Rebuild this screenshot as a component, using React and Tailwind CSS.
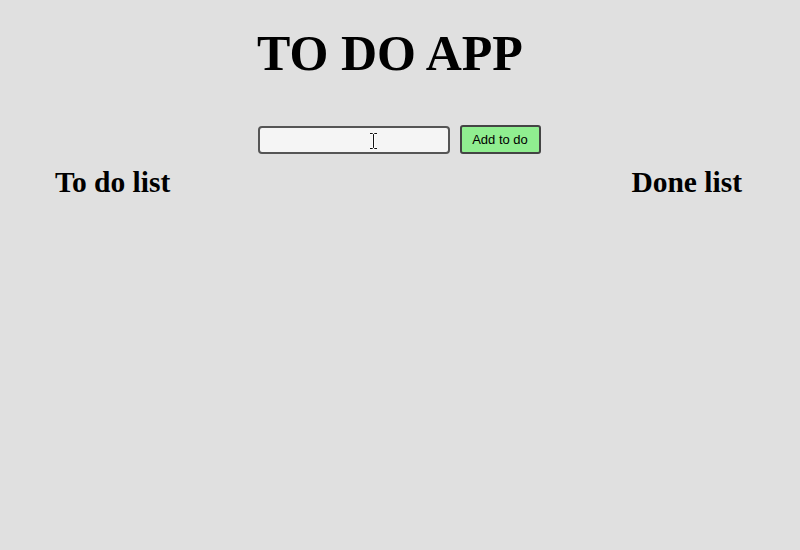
import React from "react";

const App = () => {
  return (
    <div className="min-h-screen bg-[#e0e0e0] font-['Liberation_Serif',serif] text-black">
      {/* Title */}
      <h1 className="pt-[26px] pr-[20px] text-center text-[50px] font-bold leading-[55px]">
        TO DO APP
      </h1>

      {/* Input row */}
      <div className="mt-[44px] flex items-center justify-center gap-[10px] pr-[2px]">
        <div className="relative">
          <input
            type="text"
            className="h-[28px] w-[192px] rounded-[4px] border-2 border-[#555] bg-[#f5f5f5] px-1 outline-none"
          />
          {/* mouse cursor */}
          <svg
            className="pointer-events-none absolute left-[111px] top-[7px]"
            width="9"
            height="16"
            viewBox="0 0 9 16"
          >
            <path d="M1 0.5h2.5l1 1 1-1H8M4.5 1.5v13M1 15.5h2.5l1-1 1 1H8" fill="none" stroke="#fff" strokeWidth="2.5" />
            <path d="M1 0.5h2.5l1 1 1-1H8M4.5 1.5v13M1 15.5h2.5l1-1 1 1H8" fill="none" stroke="#111" strokeWidth="1" />
          </svg>
        </div>
        <button className="h-[29px] w-[81px] rounded-[3px] border-2 border-[#444] bg-[#90ee90] font-['Liberation_Sans',sans-serif] text-[13px] leading-none">
          Add to do
        </button>
      </div>

      {/* Lists */}
      <div className="mt-[11px] flex justify-between pl-[55px] pr-[58px]">
        <h2 className="text-[29.5px] font-bold leading-[34px]">To do list</h2>
        <h2 className="text-[29.5px] font-bold leading-[34px]">Done list</h2>
      </div>
    </div>
  );
};

export default App;
